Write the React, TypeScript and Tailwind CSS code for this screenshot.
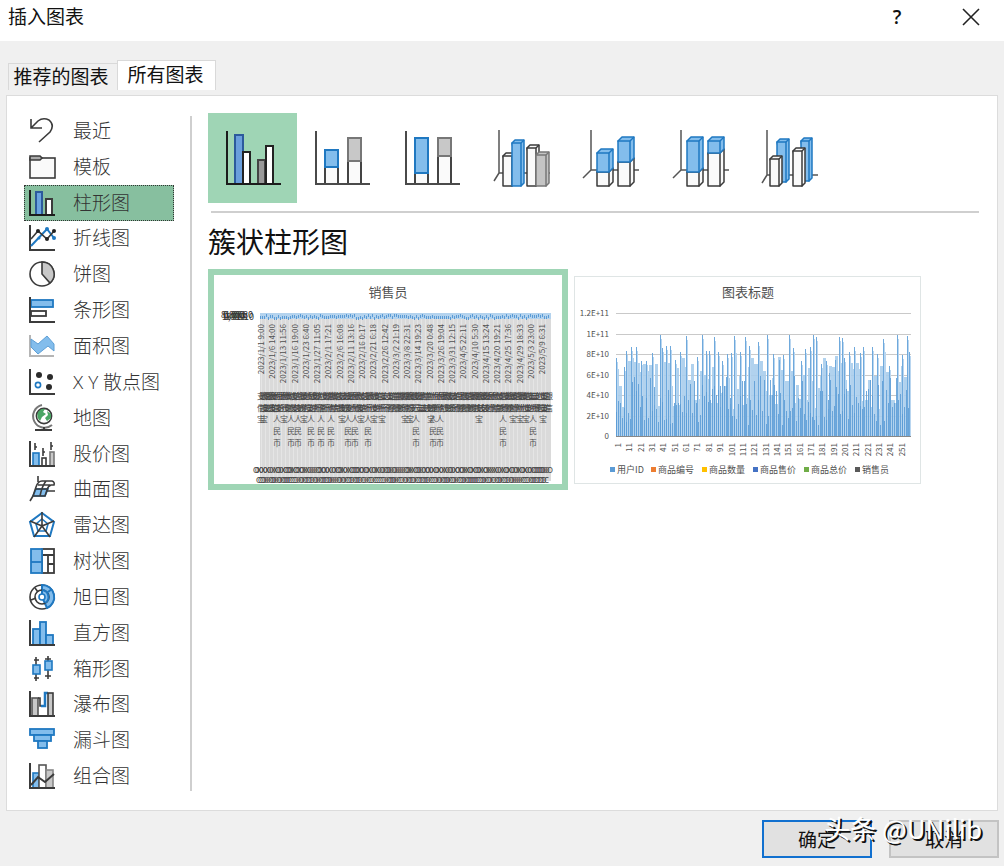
import { ReactNode, useState } from "react";

const BLUE = "#83bdec";
const EDGE = "#1f78c1";
const DARK = "#3b3b3b";
const GRAY = "#c8c8c8";

/* ---------- sidebar icons ---------- */

const Axis = ({ color = DARK }: { color?: string }) => (
  <path d="M2 1V26H27" fill="none" stroke={color} strokeWidth="2" />
);

const icons: Record<string, ReactNode> = {
  recent: <path d="M3 2V11H14M3 11L10 4Q15 0 21 3Q27 8 22 15L11 25" fill="none" stroke={DARK} strokeWidth="1.6" />,
  template: (
    <g stroke={DARK} strokeWidth="1.6">
      <rect x="2" y="5" width="25" height="20" fill="#fafafa" />
      <path d="M2 3H12L14 5L12 7H2Z" fill="#aaa" />
    </g>
  ),
  column: (
    <g strokeWidth="2">
      <rect x="8" y="3" width="6" height="23" fill="#6aa3e0" stroke="#2c5a9c" />
      <rect x="18" y="10" width="6" height="16" fill="#fff" stroke={DARK} />
      <Axis color="#1c1c1c" />
    </g>
  ),
  line: (
    <g strokeWidth="1.6" fill="none">
      <Axis />
      <path d="M3 22L19 5L26 14" stroke={EDGE} strokeWidth="2" />
      <path d="M3 15L10 7L19 15L26 7" stroke={DARK} />
      <g fill={EDGE}>
        <circle cx="19" cy="5" r="2" />
        <circle cx="26" cy="14" r="2" />
        <circle cx="11" cy="14" r="1.5" />
      </g>
      <g fill="#222">
        <circle cx="10" cy="7" r="2" />
        <circle cx="19" cy="15" r="2" />
        <circle cx="26" cy="7" r="2" />
      </g>
    </g>
  ),
  pie: (
    <g stroke={DARK} strokeWidth="1.6">
      <circle cx="14" cy="14" r="12" fill="#fff" />
      <path d="M14 2A12 12 0 0 1 22 23L14 14Z" fill={GRAY} />
    </g>
  ),
  bar: (
    <g strokeWidth="1.8">
      <rect x="3" y="4" width="22" height="7" fill={BLUE} stroke={EDGE} />
      <rect x="3" y="15" width="15" height="5" fill="#fff" stroke={DARK} />
      <Axis />
    </g>
  ),
  area: (
    <g>
      <path d="M2 3V24H26" fill="none" stroke="#b5b5b5" strokeWidth="2" />
      <path d="M3 7L10 12L19 4L26 12V19L20 14L10 22L3 15Z" fill={BLUE} stroke="#5d9fd6" />
    </g>
  ),
  scatter: (
    <g fill="#2b2b2b">
      <Axis />
      <circle cx="11" cy="7" r="3" />
      <circle cx="22" cy="9" r="3" />
      <circle cx="21" cy="19" r="3" />
      <circle cx="10" cy="17" r="2.6" fill="#fff" stroke={EDGE} strokeWidth="1.6" />
    </g>
  ),
  map: (
    <g fill="none" stroke={DARK} strokeWidth="1.6">
      <circle cx="16" cy="12" r="7.6" fill="#fff" />
      <path d="M10 8Q13 4 17 5L15 8L18 10L14 13L12 17Q8 13 10 8ZM19 7L23 10V14L19 17L17 14L20 11Z" fill="#4aa564" stroke="none" />
      <path d="M14 1A11.5 11.5 0 1 0 24 21" stroke="#777" strokeWidth="2" />
      <path d="M16 23V26M7 26H24" strokeWidth="2" />
    </g>
  ),
  stock: (
    <g strokeWidth="1.6">
      <rect x="5" y="13" width="6" height="13" fill={BLUE} stroke={EDGE} />
      <rect x="14" y="18" width="4" height="8" fill="#fff" stroke={DARK} />
      <rect x="22" y="12" width="4" height="14" fill={GRAY} stroke="#777" />
      <path d="M7 3V10M7 7H9M15 8V16M15 12H17M23 2V10M23 6H25" stroke={DARK} fill="none" />
      <Axis />
    </g>
  ),
  surface: (
    <g stroke={DARK} strokeWidth="1.6" fill="none">
      <path d="M8 14H20L17 21H5Z" fill={BLUE} stroke={EDGE} />
      <path d="M10 1V7M5 21L8 12Q10 6 14 6H24Q27 7 26 10H23Q20 11 19 15L17 21H5M8 14H20M19 16H27M18 6Q14 11 12 21M2 26L5 21M10 10H22" />
    </g>
  ),
  radar: (
    <g fill="none" strokeWidth="1.6">
      <path d="M14 2L26 11L22 25H6L2 11Z" stroke={EDGE} strokeWidth="2" />
      <path d="M14 8L20 13L18 20H10L8 13Z" stroke={EDGE} />
      <path d="M14 1V15L26 10M14 15L22 26M14 15L6 26M14 15L2 10" stroke={DARK} />
    </g>
  ),
  treemap: (
    <g strokeWidth="1.8">
      <rect x="14" y="2" width="12" height="24" fill="#fff" stroke={DARK} />
      <path d="M14 8H26M20 8V26M20 17H26" stroke={DARK} />
      <rect x="3" y="2" width="11" height="24" fill={BLUE} stroke={EDGE} />
      <path d="M3 15H14" stroke={EDGE} />
    </g>
  ),
  sunburst: (
    <g strokeWidth="1.6" fill="none">
      <circle cx="14" cy="14" r="12" fill="#fff" stroke={DARK} />
      <path d="M14 2A12 12 0 0 1 19 25L14 14Z" fill={BLUE} stroke={EDGE} strokeWidth="2" />
      <circle cx="14" cy="14" r="7" stroke={DARK} />
      <path d="M14 7A7 7 0 0 1 17 20M20 9L24 6" stroke={EDGE} strokeWidth="2" />
      <circle cx="14" cy="14" r="3" fill="#fff" stroke={EDGE} />
      <path d="M3 17L8 15M7 5L10 9" stroke={DARK} />
    </g>
  ),
  histogram: (
    <g strokeWidth="1.8">
      <g fill={BLUE} stroke={EDGE}>
        <rect x="5" y="10" width="7" height="16" />
        <rect x="12" y="3" width="6" height="23" />
        <rect x="18" y="16" width="7" height="10" />
      </g>
      <Axis />
    </g>
  ),
  box: (
    <g strokeWidth="1.6">
      <path d="M8 2V26M6 5H11M6 23H11M20 1V24M17 4H23M17 21H23" stroke={DARK} />
      <g fill={BLUE} stroke={EDGE}>
        <rect x="5" y="10" width="7" height="9" />
        <rect x="17" y="6" width="7" height="9" />
      </g>
    </g>
  ),
  waterfall: (
    <g strokeWidth="1.6">
      <rect x="4" y="8" width="6" height="18" fill={GRAY} stroke="#555" />
      <path d="M10 8H12V16H14" fill="none" stroke={DARK} />
      <path d="M13 16H17V3H20" fill="none" stroke={EDGE} strokeWidth="2.5" />
      <rect x="20" y="3" width="5" height="23" fill={GRAY} stroke={DARK} />
      <Axis />
    </g>
  ),
  funnel: (
    <g fill={BLUE} stroke={EDGE} strokeWidth="1.8">
      <rect x="2" y="3" width="24" height="6" />
      <rect x="6" y="9" width="17" height="6" />
      <rect x="10" y="15" width="9" height="7" />
    </g>
  ),
  combo: (
    <g strokeWidth="1.6">
      <rect x="5" y="11" width="6" height="15" fill={BLUE} stroke={EDGE} />
      <rect x="11" y="3" width="7" height="23" fill="#fff" stroke="#555" />
      <rect x="18" y="8" width="7" height="18" fill={GRAY} stroke="#888" />
      <path d="M3 23L10 15L17 20L26 12" fill="none" stroke={DARK} strokeWidth="2" />
      <Axis />
    </g>
  ),
};

const categories = [
  { id: "recent", label: "最近" },
  { id: "template", label: "模板" },
  { id: "column", label: "柱形图" },
  { id: "line", label: "折线图" },
  { id: "pie", label: "饼图" },
  { id: "bar", label: "条形图" },
  { id: "area", label: "面积图" },
  { id: "scatter", label: "X Y 散点图" },
  { id: "map", label: "地图" },
  { id: "stock", label: "股价图" },
  { id: "surface", label: "曲面图" },
  { id: "radar", label: "雷达图" },
  { id: "treemap", label: "树状图" },
  { id: "sunburst", label: "旭日图" },
  { id: "histogram", label: "直方图" },
  { id: "box", label: "箱形图" },
  { id: "waterfall", label: "瀑布图" },
  { id: "funnel", label: "漏斗图" },
  { id: "combo", label: "组合图" },
];

/* ---------- column subtype icons ---------- */

interface PillarProps {
  x: number;
  w: number;
  y: number;
  bottom?: number;
  depth?: number;
  fill?: string;
  stroke?: string;
}

function Pillar({ x, w, y, bottom = 58, depth = 3, fill = "#fafafa", stroke = DARK }: PillarProps) {
  return (
    <g fill={fill} stroke={stroke} strokeWidth="1.5" strokeLinejoin="round">
      <path d={`M${x} ${y}L${x + depth} ${y - depth}H${x + w + depth}V${bottom - depth}L${x + w} ${bottom}Z`} />
      <path d={`M${x + w} ${y}L${x + w + depth} ${y - depth}`} />
      <rect x={x} y={y} width={w} height={bottom - y} />
    </g>
  );
}

const FlatAxis = ({ color = "#4a4a4a" }: { color?: string }) => (
  <path d="M4 3V56H58" fill="none" stroke={color} strokeWidth="2" />
);

const DeepAxis = ({ x, y }: { x: number; y: number }) => (
  <path d={`M${x} 2V${y}H59M${x} ${y}L3 ${y + 8}`} fill="none" stroke="#555" strokeWidth="1.5" />
);

const subtypes = [
  {
    name: "簇状柱形图",
    art: (
      <g strokeWidth="2">
        <rect x="12" y="7" width="8" height="49" fill="#6a9fdc" stroke="#2c5a9c" />
        <rect x="20" y="24" width="7" height="32" fill="#fff" stroke="#222" />
        <rect x="35" y="32" width="7" height="24" fill="#999" stroke="#444" />
        <rect x="43" y="18" width="7" height="38" fill="#fff" stroke="#222" />
        <FlatAxis color="#1c1c1c" />
      </g>
    ),
  },
  {
    name: "堆积柱形图",
    art: (
      <g strokeWidth="2">
        <rect x="13" y="39" width="13" height="17" fill="#fafafa" stroke="#444" />
        <rect x="13" y="22" width="13" height="17" fill={BLUE} stroke={EDGE} />
        <rect x="36" y="33" width="13" height="23" fill="#fafafa" stroke="#444" />
        <rect x="36" y="10" width="13" height="23" fill={GRAY} stroke="#777" />
        <FlatAxis />
      </g>
    ),
  },
  {
    name: "百分比堆积柱形图",
    art: (
      <g strokeWidth="2">
        <rect x="13" y="45" width="13" height="11" fill="#fafafa" stroke="#444" />
        <rect x="13" y="10" width="13" height="35" fill={BLUE} stroke={EDGE} />
        <rect x="36" y="28" width="13" height="28" fill="#fafafa" stroke="#444" />
        <rect x="36" y="10" width="13" height="18" fill={GRAY} stroke="#777" />
        <FlatAxis />
      </g>
    ),
  },
  {
    name: "三维簇状柱形图",
    art: (
      <g>
        <DeepAxis x={8} y={45} />
        <Pillar x={12} w={9} y={28} />
        <Pillar x={21} w={9} y={15} fill={BLUE} stroke={EDGE} />
        <Pillar x={36} w={9} y={20} />
        <Pillar x={45} w={10} y={27} fill="#c4c4c4" stroke="#777" />
      </g>
    ),
  },
  {
    name: "三维堆积柱形图",
    art: (
      <g>
        <DeepAxis x={11} y={42} />
        <Pillar x={17} w={12} y={44} depth={4} />
        <Pillar x={17} w={12} y={25} bottom={44} depth={4} fill={BLUE} stroke={EDGE} />
        <Pillar x={38} w={12} y={34} depth={4} />
        <Pillar x={38} w={12} y={13} bottom={34} depth={4} fill={BLUE} stroke={EDGE} />
      </g>
    ),
  },
  {
    name: "三维百分比堆积柱形图",
    art: (
      <g>
        <DeepAxis x={11} y={42} />
        <Pillar x={17} w={12} y={44} depth={4} />
        <Pillar x={17} w={12} y={13} bottom={44} depth={4} fill={BLUE} stroke={EDGE} />
        <Pillar x={38} w={12} y={25} depth={4} />
        <Pillar x={38} w={12} y={13} bottom={25} depth={4} fill={BLUE} stroke={EDGE} />
      </g>
    ),
  },
  {
    name: "三维柱形图",
    art: (
      <g>
        <DeepAxis x={8} y={47} />
        <Pillar x={18} w={9} y={14} bottom={54} fill={BLUE} stroke={EDGE} />
        <Pillar x={42} w={8} y={13} bottom={53} fill={BLUE} stroke={EDGE} />
        <Pillar x={11} w={9} y={31} />
        <Pillar x={34} w={9} y={23} />
      </g>
    ),
  },
];

/* ---------- chart previews ---------- */

const dates = [
  "1/1 9:00", "1/6 14:00", "1/13 11:56", "1/16 19:00", "1/23 6:40", "1/27 11:05", "2/1 17:21",
  "2/6 16:08", "2/11 13:16", "2/16 0:17", "2/21 6:18", "2/26 12:42", "3/2 21:19", "3/8 22:31",
  "3/14 19:23", "3/20 0:48", "3/26 19:04", "3/31 12:15", "4/5 22:11", "4/10 5:30", "4/15 13:24",
  "4/20 19:21", "4/25 17:36", "4/29 18:33", "5/3 23:00", "5/9 6:31",
];

// x of the wrapped payment labels under the date axis
const rmb = [63, 77, 84, 97, 107, 117, 134, 141, 154, 202, 219, 226, 289, 319];
const bao = [47, 50, 70, 90, 128, 147, 160, 168, 191, 196, 217, 265, 299, 306, 312, 329];

const rand = (n: number) => {
  const v = Math.sin(n * 127.1 + 11.7) * 43758.5453;
  return v - Math.floor(v);
};

// category labels too many for the axis, so they pile up on each other
const pile = (from: number, count: number, step: number) =>
  Array.from({ length: count }, (_, i) => from + i * step).join(" ");
const pick = (chars: string, count: number, seed: number) =>
  Array.from({ length: count }, (_, i) => chars[Math.floor(rand(i + seed) * chars.length)]).join("");

function SalesPreview() {
  return (
    <svg viewBox="0 0 348 209" className="block w-full" fill="#505050" fontSize="8">
      <text x="174" y="22" fontSize="13" textAnchor="middle">销售员</text>
      <rect x="46" y="44" width="291" height="162" fill="#dadada" />
      {Array.from({ length: 72 }, (_, i) => (
        <rect key={i} x={47 + i * 4} y="44" width="1" height="162" fill="#e5e5e5" />
      ))}
      <rect x="46" y="38" width="291" height="6" fill="#b4d3ee" />
      {Array.from({ length: 145 }, (_, i) => (
        <rect key={i} x={46 + i * 2} y={39 + Math.round(rand(i) * 3)} width="1" height="3" fill="#5b9bd5" />
      ))}
      <g fill="#333" fontSize="9">
        <text x={pile(7, 12, 2)} y="43">801,800080180</text>
        <text x={pile(8, 12, 2)} y="45">108,000180810</text>
      </g>
      {dates.map((d, i) => (
        <text key={d} transform={`translate(${50 + Math.round(i * 11.24)} 49) rotate(-90)`} textAnchor="end">
          {"2023/" + d}
        </text>
      ))}
      <g fill="#444">
        <text x={pile(43, 145, 2)} y="124">{pick("支微信付银", 145, 3)}</text>
        <text x={pile(43, 145, 2)} y="136">{pick("付信行支钱", 145, 9)}</text>
        <text x={pile(39, 148, 2)} y="198">{pick("XO0", 148, 21)}</text>
        <text x={pile(42, 145, 2)} y="208">{pick("O0C", 145, 33)}</text>
      </g>
      {bao.map((x) => (
        <text key={x} x={x - 4} y="147">宝</text>
      ))}
      {rmb.map((x) => (
        <g key={x} textAnchor="middle">
          <text x={x} y="147">人</text>
          <text x={x} y="159">民</text>
          <text x={x} y="171">币</text>
        </g>
      ))}
    </svg>
  );
}

// tallest columns of the second preview: [x, top]
const peaks = [
  [42, 81], [50, 90], [52, 74], [57, 70], [62, 70], [67, 84], [72, 84], [78, 76], [86, 58], [88, 71],
  [92, 69], [96, 69], [101, 83], [106, 75], [112, 59], [123, 80], [128, 58], [132, 74], [135, 74],
  [140, 60], [144, 75], [148, 84], [153, 77], [157, 76], [160, 59], [161, 72], [166, 75], [171, 60],
  [175, 69], [184, 65], [193, 58], [199, 77], [205, 83], [209, 78], [215, 58], [219, 71], [227, 84],
  [231, 72], [236, 70], [239, 58], [242, 60], [247, 87], [252, 84], [255, 96], [261, 83], [265, 60],
  [268, 61], [270, 81], [275, 75], [280, 70], [286, 76], [289, 70], [298, 70], [303, 77], [309, 62],
  [310, 71], [315, 89], [323, 58], [328, 78], [333, 59], [335, 75],
];

const legend = [
  { x: 35, color: "#5b9bd5", label: "用户ID" },
  { x: 76, color: "#ed7d31", label: "商品编号" },
  { x: 127, color: "#ffc000", label: "商品数量" },
  { x: 178, color: "#4472c4", label: "商品售价" },
  { x: 229, color: "#70ad47", label: "商品总价" },
  { x: 280, color: "#595959", label: "销售员" },
];

function TitlePreview() {
  return (
    <svg viewBox="0 0 345 206" className="block w-full" fill="#505050" fontSize="8">
      <text x="173" y="20" fontSize="13" textAnchor="middle">图表标题</text>
      {["1.2E+11", "1E+11", "8E+10", "6E+10", "4E+10", "2E+10", "0"].map((t, i) => (
        <g key={t}>
          <rect x="41" y={36 + Math.round(i * 20.5)} width="295" height="1" fill="#c9c9c9" />
          <text x="34" y={39 + Math.round(i * 20.5)} textAnchor="end">{t}</text>
        </g>
      ))}
      {Array.from({ length: 98 }, (_, i) => {
        const h = Math.round(26 + rand(i + 500) * 56);
        return <rect key={i} x={41 + i * 3} y={159 - h} width="3" height={h} fill="#a9cdec" fillOpacity="0.9" />;
      })}
      {peaks.map(([x, y]) => (
        <rect key={x} x={x - 1} y={y} width="1" height={159 - y} fill="#6fa9dc" />
      ))}
      {peaks.map(([x, y]) => (
        <rect key={x} x={x} y={y + 4} width="1" height={155 - y} fill="#b9d6f0" />
      ))}
      {Array.from({ length: 147 }, (_, i) => {
        const h = Math.round(10 + rand(i + 40) * 50);
        return <rect key={i} x={41 + i * 2} y={159 - h} width="1" height={h} fill="#5b9bd5" fillOpacity="0.85" />;
      })}
      <rect x="41" y="159" width="295" height="1" fill="#888" />
      {Array.from({ length: 26 }, (_, i) => (
        <text key={i} transform={`translate(${46 + Math.round(i * 11.35)} 166) rotate(-90)`} textAnchor="end">
          {i * 10 + 1}
        </text>
      ))}
      {legend.map((l) => (
        <g key={l.label}>
          <rect x={l.x} y="190" width="5" height="5" fill={l.color} />
          <text x={l.x + 7} y="196" fontSize="9">{l.label}</text>
        </g>
      ))}
    </svg>
  );
}

/* ---------- dialog ---------- */

export default function App() {
  const [category, setCategory] = useState("column");
  const [subtype, setSubtype] = useState(0);

  return (
    <div className="relative flex min-h-screen flex-col bg-[#f0f0f0] font-['Noto_Sans_CJK_SC',sans-serif] text-[19px] leading-6 text-[#111]">
      {/* Title bar */}
      <header className="flex h-[41px] items-start justify-between bg-white pt-1 pr-6 pl-2">
        <h1>插入图表</h1>
        <div className="flex items-center gap-[57px]">
          <button aria-label="帮助" className="w-4 text-center font-['Open_Sans',sans-serif] font-semibold">?</button>
          <button aria-label="关闭" className="py-1">
            <svg viewBox="0 0 18 18" className="block h-[18px] w-[18px]">
              <path d="M1 1L17 17M17 1L1 17" stroke="#222" strokeWidth="1.6" />
            </svg>
          </button>
        </div>
      </header>

      {/* Tabs */}
      <div role="tablist" className="flex items-end px-2 pt-[19px]">
        <button role="tab" aria-selected="false" className="h-[27px] w-[109px] border border-r-0 border-b-0 border-[#d9d9d9] pr-1 pb-1 whitespace-nowrap">
          推荐的图表
        </button>
        <button role="tab" aria-selected="true" className="h-[30px] w-[99px] border border-b-0 border-[#d9d9d9] bg-white pr-[2px] pb-1">
          所有图表
        </button>
      </div>

      {/* Panel */}
      <main className="mx-[6px] mt-[5px] flex flex-1 border border-[#dcdcdc] bg-white pt-[17px] pb-4 pl-[17px]">
        <nav className="flex min-h-[680px] w-[150px] shrink-0 flex-col font-['Open_Sans','Noto_Sans_CJK_SC',sans-serif]">
          {categories.map((c) => (
            <button
              key={c.id}
              onClick={() => setCategory(c.id)}
              className={`flex flex-1 items-center gap-[17px] border border-dotted pl-[3px] font-light whitespace-nowrap text-[#333] ${
                category === c.id ? "border-[#333] bg-[#87bf9f]" : "border-transparent"
              }`}
            >
              <svg viewBox="0 0 28 28" className="h-7 w-7 shrink-0">{icons[c.id]}</svg>
              {c.label}
            </button>
          ))}
        </nav>

        <div className="mx-4 mt-[3px] mb-[3px] w-[2px] bg-[#cfcfcf]" />

        <section className="min-w-0 flex-1 pr-[18px]">
          <div className="flex max-w-[626px]">
            {subtypes.map((s, i) => (
              <button
                key={s.name}
                aria-label={s.name}
                onClick={() => setSubtype(i)}
                className={`flex h-[90px] flex-1 items-center justify-center ${subtype === i ? "bg-[#9fd5b5]" : ""}`}
              >
                <svg viewBox="0 0 60 60" className="h-[60px] w-[60px]">{s.art}</svg>
              </button>
            ))}
          </div>
          <hr className="mt-2 ml-[3px] border-t-2 border-[#cfcfcf]" />

          <h2 className="mt-2 text-[28px] leading-10">{subtypes[subtype].name}</h2>

          <div className="mt-2 flex items-center gap-[6px]">
            <button aria-label="销售员" className="w-[360px] border-[6px] border-[#9fd5b5] bg-white">
              <SalesPreview />
            </button>
            <button aria-label="图表标题" className="w-[347px] border border-[#dfe5e5] bg-white">
              <TitlePreview />
            </button>
          </div>
        </section>
      </main>

      {/* Footer */}
      <footer className="flex justify-end gap-[17px] pt-[9px] pr-[5px] pb-2">
        <button className="h-[38px] w-[110px] border-2 border-[#1170cf] bg-[#e1e1e1]">确定</button>
        <button className="h-[38px] w-[110px] border-2 border-[#c3c3c3] bg-[#e1e1e1]">取消</button>
      </footer>

      {/* Watermark */}
      <div className="pointer-events-none absolute right-[22px] bottom-[22px] text-[26px] leading-8 whitespace-nowrap text-white [text-shadow:2px_2px_0_#111]">
        头条 @UNilib
      </div>
    </div>
  );
}
